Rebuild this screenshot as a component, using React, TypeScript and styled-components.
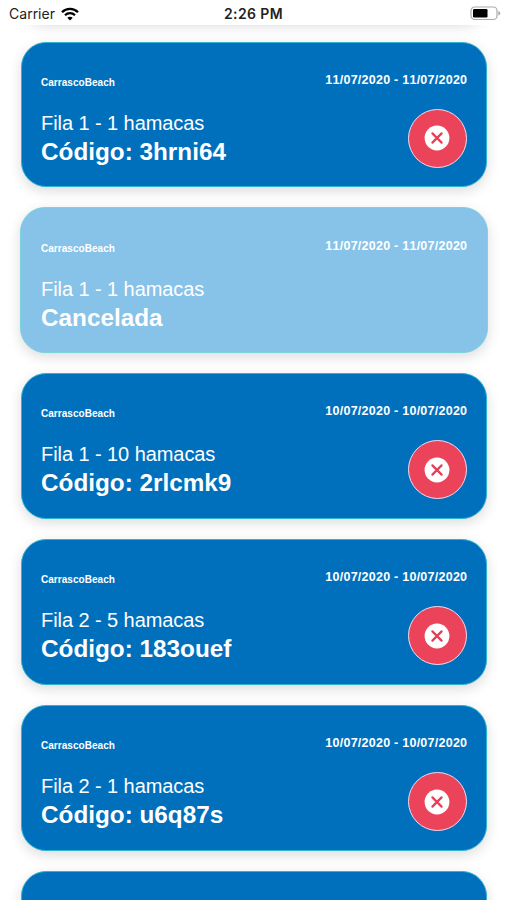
import React from "react";
import styled, { createGlobalStyle } from "styled-components";

const GlobalStyle = createGlobalStyle`
  *, *::before, *::after { box-sizing: border-box; }
  body { margin: 0; background: #fff; }
`;

const Screen = styled.main`
  display: flex;
  flex-direction: column;
  width: 507px;
  height: 900px;
  overflow: hidden;
  background: #fff;
  font-family: "Liberation Sans", Arial, sans-serif;
  font-kerning: none;
`;

const StatusBar = styled.header`
  display: grid;
  grid-template-columns: 1fr auto 1fr;
  align-items: center;
  flex: none;
  height: 25px;
  padding: 2px 6px 0 9px;
  font-family: Inter, sans-serif;
  color: #222;
`;

const Carrier = styled.div`
  display: flex;
  align-items: center;
  gap: 6px;
  font-size: 14px;
  line-height: 20px;
  letter-spacing: 0.1px;
`;

const Clock = styled.time`
  margin-right: 3px;
  font-size: 14px;
  line-height: 20px;
  font-weight: 600;
  letter-spacing: 0.4px;
`;

const Battery = styled.svg`
  justify-self: end;
`;

const List = styled.section`
  flex: 1;
  min-height: 0;
  overflow: hidden;
`;

const Track = styled.div`
  display: flex;
  flex-direction: column;
  gap: 20px;
  margin-top: -149.4px;
  padding: 0 20px 0 21px;
`;

const Card = styled.article<{ $cancelled?: boolean }>`
  display: flex;
  flex: none;
  flex-direction: column;
  height: 145.9px;
  margin: ${(p) => (p.$cancelled ? "0 -1px" : "0")};
  padding: ${(p) => (p.$cancelled ? "30px 20px 0" : "29px 19px 0")};
  border: 1px solid ${(p) => (p.$cancelled ? "#7bd3dc" : "#2db4d0")};
  border-radius: 25px;
  background: ${(p) => (p.$cancelled ? "#87c2e8" : "#0070bd")};
  box-shadow: 0 4px 13px rgba(0, 0, 0, 0.14);
  color: #fff;
`;

const CardHead = styled.div`
  display: flex;
  justify-content: space-between;
  height: 37px;
`;

const Beach = styled.span`
  padding-top: 5px;
  font-size: 10px;
  line-height: 12px;
  font-weight: 700;
  letter-spacing: 0.04px;
`;

const Dates = styled.span`
  margin-right: -0.3px;
  font-size: 12.5px;
  line-height: 16px;
  font-weight: 700;
  letter-spacing: 0.25px;
`;

const CardBody = styled.div`
  display: flex;
  justify-content: space-between;
`;

const Details = styled.div`
  padding-top: 2px;
`;

const Row = styled.p`
  margin: 0;
  font-size: 20px;
  line-height: 24px;
  letter-spacing: -0.07px;
`;

const Code = styled.p`
  margin: 2px 0 0;
  font-size: 24.3px;
  line-height: 30px;
  font-weight: 700;
`;

const CancelButton = styled.button`
  display: flex;
  align-items: center;
  justify-content: center;
  width: 59px;
  height: 59px;
  padding: 0;
  border: 1.5px solid #f3dcec;
  border-radius: 50%;
  background: #eb445a;
`;

const CloseIcon = styled.svg`
  flex: none;
  margin-right: 1px;
`;

type Booking = { dates: string; row: string; status: string; cancelled?: boolean };

const bookings: Booking[] = [
  { dates: "11/07/2020 - 11/07/2020", row: "Fila 1 - 1 hamacas", status: "Código: 3hrni64" },
  { dates: "11/07/2020 - 11/07/2020", row: "Fila 1 - 1 hamacas", status: "Cancelada", cancelled: true },
  { dates: "10/07/2020 - 10/07/2020", row: "Fila 1 - 10 hamacas", status: "Código: 2rlcmk9" },
  { dates: "10/07/2020 - 10/07/2020", row: "Fila 2 - 5 hamacas", status: "Código: 183ouef" },
  { dates: "10/07/2020 - 10/07/2020", row: "Fila 2 - 1 hamacas", status: "Código: u6q87s" },
];

function BookingCard({ booking }: { booking: Booking }) {
  return (
    <Card $cancelled={booking.cancelled}>
      <CardHead>
        <Beach>CarrascoBeach</Beach>
        <Dates>{booking.dates}</Dates>
      </CardHead>
      <CardBody>
        <Details>
          <Row>{booking.row}</Row>
          <Code>{booking.status}</Code>
        </Details>
        {!booking.cancelled && (
          <CancelButton aria-label="Cancelar">
            <CloseIcon width="26" height="26" viewBox="0 0 26 26">
              <circle cx="13" cy="13" r="12.4" fill="#fff" />
              <path d="M8.4 8.4l9.2 9.2M17.6 8.4l-9.2 9.2" stroke="#e43e58" strokeWidth="2.2" strokeLinecap="round" />
            </CloseIcon>
          </CancelButton>
        )}
      </CardBody>
    </Card>
  );
}

export default function App() {
  return (
    <Screen>
      <GlobalStyle />
      <StatusBar>
        <Carrier>
          <span>Carrier</span>
          <svg width="18" height="14" viewBox="0 0 18 14" fill="none" stroke="#000" strokeWidth="2.3">
            <path d="M1 5.2C5.4.7 12.6.7 17 5.2" />
            <path d="M4 8.3c2.8-2.8 7.2-2.8 10 0" />
            <path d="M9 13.6L6.3 10.8c1.5-1.5 3.9-1.5 5.4 0z" fill="#000" stroke="none" />
          </svg>
        </Carrier>
        <Clock>2:26 PM</Clock>
        <Battery width="31" height="15" viewBox="0 0 31 15">
          <rect x="1" y="1" width="26" height="12.5" rx="3.6" fill="#fff" stroke="#aaa" strokeWidth="1.2" />
          <rect x="3" y="3" width="14.5" height="8.5" rx="1.3" fill="#000" />
          <path d="M28.3 5c2.7.8 2.7 3.7 0 4.5z" fill="#aaa" />
        </Battery>
      </StatusBar>
      <List>
        <Track>
          <Card />
          {bookings.map((booking) => (
            <BookingCard key={booking.status} booking={booking} />
          ))}
          <Card />
        </Track>
      </List>
    </Screen>
  );
}
